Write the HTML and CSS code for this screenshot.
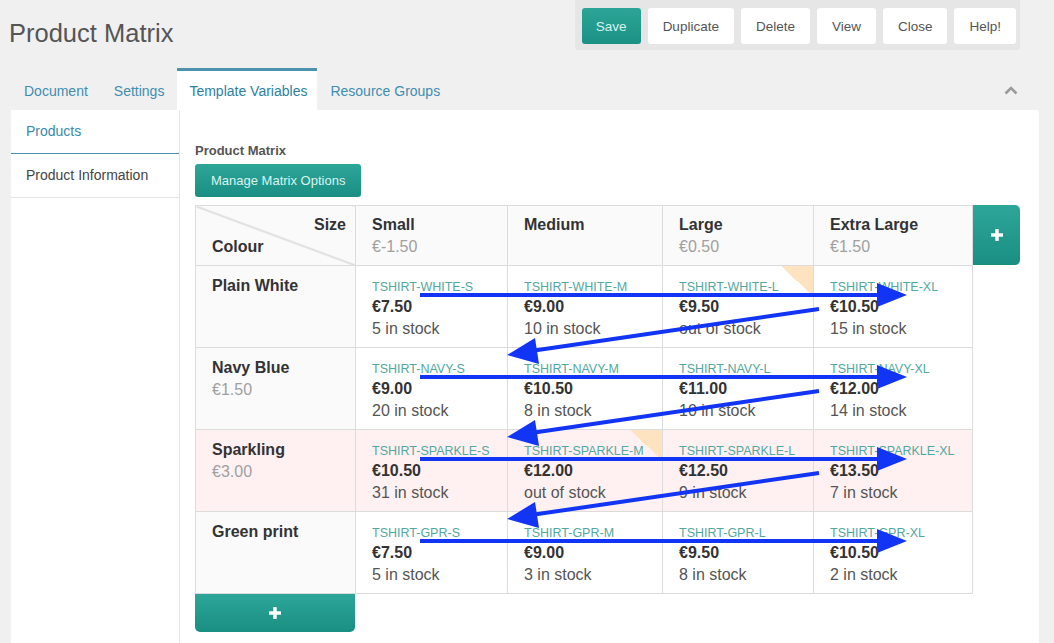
FILE: index.html
```html
<!DOCTYPE html>
<html lang="en">
<head>
<meta charset="utf-8">
<title>Product Matrix</title>
<link rel="stylesheet" href="styles.css">
</head>
<body>
<header class="topbar">
  <h1 class="title">Product Matrix</h1>
  <div class="actions">
    <button class="btn btn-primary">Save</button>
    <button class="btn">Duplicate</button>
    <button class="btn">Delete</button>
    <button class="btn">View</button>
    <button class="btn">Close</button>
    <button class="btn">Help!</button>
  </div>
</header>

<nav class="tabs">
  <div class="tab-list">
    <a class="tab">Document</a>
    <a class="tab">Settings</a>
    <a class="tab tab-active">Template Variables</a>
    <a class="tab">Resource Groups</a>
  </div>
  <svg class="chevron" width="14" height="9" viewBox="0 0 14 9"><path d="M1.5 7.5 L7 2 L12.5 7.5" fill="none" stroke="#9a9a9a" stroke-width="2.6"/></svg>
</nav>

<section class="panel">
  <aside class="side-nav">
    <div class="side-item side-active">Products</div>
    <div class="side-item">Product Information</div>
  </aside>
  <main class="content">
    <div class="field-label">Product Matrix</div>
    <button class="btn-teal manage">Manage Matrix Options</button>

    <div class="matrix-wrap">
      <div class="matrix-row">
        <table class="matrix">
          <colgroup>
            <col class="c0"><col class="c1"><col class="c2"><col class="c3"><col class="c4">
          </colgroup>
          <tr class="head">
            <td class="corner"><div class="size">Size</div><div class="colour">Colour</div></td>
            <td><div class="h">Small</div><div class="muted">€-1.50</div></td>
            <td><div class="h">Medium</div></td>
            <td><div class="h">Large</div><div class="muted">€0.50</div></td>
            <td><div class="h">Extra Large</div><div class="muted">€1.50</div></td>
          </tr>
          <tr>
            <td class="label"><div class="h">Plain White</div></td>
            <td class="cell"><div class="sku">TSHIRT-WHITE-S</div><div class="price">€7.50</div><div class="stock">5 in stock</div></td>
            <td class="cell"><div class="sku">TSHIRT-WHITE-M</div><div class="price">€9.00</div><div class="stock">10 in stock</div></td>
            <td class="cell flag"><div class="sku">TSHIRT-WHITE-L</div><div class="price">€9.50</div><div class="stock">out of stock</div></td>
            <td class="cell"><div class="sku">TSHIRT-WHITE-XL</div><div class="price">€10.50</div><div class="stock">15 in stock</div></td>
          </tr>
          <tr>
            <td class="label"><div class="h">Navy Blue</div><div class="muted">€1.50</div></td>
            <td class="cell"><div class="sku">TSHIRT-NAVY-S</div><div class="price">€9.00</div><div class="stock">20 in stock</div></td>
            <td class="cell"><div class="sku">TSHIRT-NAVY-M</div><div class="price">€10.50</div><div class="stock">8 in stock</div></td>
            <td class="cell"><div class="sku">TSHIRT-NAVY-L</div><div class="price">€11.00</div><div class="stock">10 in stock</div></td>
            <td class="cell"><div class="sku">TSHIRT-NAVY-XL</div><div class="price">€12.00</div><div class="stock">14 in stock</div></td>
          </tr>
          <tr class="pink">
            <td class="label"><div class="h">Sparkling</div><div class="muted">€3.00</div></td>
            <td class="cell"><div class="sku">TSHIRT-SPARKLE-S</div><div class="price">€10.50</div><div class="stock">31 in stock</div></td>
            <td class="cell flag"><div class="sku">TSHIRT-SPARKLE-M</div><div class="price">€12.00</div><div class="stock">out of stock</div></td>
            <td class="cell"><div class="sku">TSHIRT-SPARKLE-L</div><div class="price">€12.50</div><div class="stock">9 in stock</div></td>
            <td class="cell"><div class="sku">TSHIRT-SPARKLE-XL</div><div class="price">€13.50</div><div class="stock">7 in stock</div></td>
          </tr>
          <tr>
            <td class="label"><div class="h">Green print</div></td>
            <td class="cell"><div class="sku">TSHIRT-GPR-S</div><div class="price">€7.50</div><div class="stock">5 in stock</div></td>
            <td class="cell"><div class="sku">TSHIRT-GPR-M</div><div class="price">€9.00</div><div class="stock">3 in stock</div></td>
            <td class="cell"><div class="sku">TSHIRT-GPR-L</div><div class="price">€9.50</div><div class="stock">8 in stock</div></td>
            <td class="cell"><div class="sku">TSHIRT-GPR-XL</div><div class="price">€10.50</div><div class="stock">2 in stock</div></td>
          </tr>
        </table>
        <button class="btn-teal add-col"><svg width="12" height="12" viewBox="0 0 12 12"><rect x="4.3" y="0" width="3.4" height="12" fill="#fff"/><rect x="0" y="4.3" width="12" height="3.4" fill="#fff"/></svg></button>
      </div>
      <button class="btn-teal add-row"><svg width="12" height="12" viewBox="0 0 12 12"><rect x="4.3" y="0" width="3.4" height="12" fill="#fff"/><rect x="0" y="4.3" width="12" height="3.4" fill="#fff"/></svg></button>

      <svg class="arrows" width="830" height="430" viewBox="0 0 830 430">
        <g id="hrow">
          <line x1="225" y1="90" x2="686" y2="90" stroke="#1234f4" stroke-width="4"/>
          <polygon points="682,78 712,90 682,102" fill="#1234f4"/>
        </g>
        <use href="#hrow" y="82"/>
        <use href="#hrow" y="164"/>
        <use href="#hrow" y="246"/>
        <g id="drow">
          <line x1="624" y1="104" x2="336" y2="146" stroke="#1234f4" stroke-width="4"/>
          <polygon points="312,150 344,159 340,133" fill="#1234f4"/>
        </g>
        <use href="#drow" y="82"/>
        <use href="#drow" y="164"/>
      </svg>
    </div>
  </main>
</section>
</body>
</html>
```

FILE: styles.css
```css
* { box-sizing: border-box; }

body {
  margin: 0;
  background: #f0f0f0;
  font-family: "Liberation Sans", Arial, Helvetica, sans-serif;
  color: #555;
}

.topbar {
  display: flex;
  justify-content: space-between;
  align-items: flex-start;
  height: 68px;
}

.title {
  margin: 19px 0 0 9px;
  font-size: 25.5px;
  line-height: 28px;
  font-weight: normal;
  color: #555;
}

.actions {
  margin-right: 34px;
  display: flex;
  gap: 7px;
  padding: 8px 4px 6px 7px;
  background: #e6e6e6;
  border-radius: 0 0 3px 3px;
}

.btn {
  height: 36px;
  padding: 0 15px;
  border: 0;
  border-radius: 3px;
  background: #fff;
  color: #555;
  font-family: "Liberation Sans", Arial, sans-serif;
  font-size: 13.5px;
}

.btn-primary {
  padding: 0 14px;
  background: linear-gradient(#2ba597, #1b9185);
  color: #d5f3ef;
}

.tabs {
  display: flex;
  justify-content: space-between;
  align-items: center;
  height: 42px;
  margin: 0 36px 0 11px;
}

.tab-list {
  display: flex;
  align-self: stretch;
}

.tab {
  display: flex;
  align-items: center;
  padding: 0 13px;
  border-top: 3px solid transparent;
  font-size: 14px;
  color: #3f8db0;
}

.tab-active {
  padding: 0 10px 0 12px;
  background: #fff;
  border-top-color: #4c91ad;
  color: #2e809f;
}

.chevron { margin-top: 2px; }

.panel {
  display: flex;
  margin: 0 15px 0 11px;
  min-height: 533px;
  background: #fff;
  border-radius: 0 3px 0 0;
}

.side-nav {
  width: 169px;
  flex: none;
  border-right: 1px solid #e4e4e4;
  background: #fff;
}

.side-item {
  padding: 13px 15px;
  line-height: 17px;
  font-size: 14px;
  color: #444;
  border-bottom: 1px solid #e4e4e4;
}

.side-active {
  color: #3b89a9;
  border-bottom-color: #4a8fab;
}

.content {
  padding: 33px 0 0 15px;
}

.field-label {
  font-size: 13px;
  line-height: 16px;
  font-weight: bold;
  color: #555;
  margin-bottom: 5px;
}

.btn-teal {
  border: 0;
  background: linear-gradient(#2da699, #1a8e82);
  color: #d8f3ef;
  font-family: "Liberation Sans", Arial, sans-serif;
  display: flex;
  align-items: center;
  justify-content: center;
}

.manage {
  height: 33px;
  padding: 0 16px;
  border-radius: 3px;
  font-size: 13px;
  margin-bottom: 8px;
}

.matrix-wrap {
  position: relative;
  display: inline-block;
}

.matrix-row {
  display: flex;
  align-items: flex-start;
}

.matrix {
  border-collapse: collapse;
  table-layout: fixed;
  width: 777px;
  font-size: 16px;
}

.c0 { width: 160px; }
.c1 { width: 152px; }
.c2 { width: 155px; }
.c3 { width: 151px; }
.c4 { width: 159px; }

.matrix td {
  border: 1px solid #dcdcdc;
  vertical-align: top;
  padding: 12px 16px 7px;
  background: #fff;
}

.matrix .head td {
  background: #fafafa;
  padding: 8px 16px 7px;
}

.matrix td.label {
  background: #fafafa;
  padding: 9px 16px 7px;
}

.matrix .pink td { background: #fff1f1; }

.matrix .head td.corner {
  padding: 8px 9px 7px 16px;
  background:
    linear-gradient(to top right, transparent calc(50% - 1.2px), #dcdcdc calc(50% - 0.6px), #dcdcdc calc(50% + 0.6px), transparent calc(50% + 1.2px)),
    #fafafa;
}

.size { text-align: right; font-weight: bold; color: #333; line-height: 22px; }
.colour { font-weight: bold; color: #333; line-height: 22px; }

.h {
  font-weight: bold;
  color: #333;
  line-height: 22px;
}

.muted {
  color: #a0a0a0;
  line-height: 22px;
}

.sku {
  font-size: 12.5px;
  line-height: 18px;
  color: #52a89e;
  white-space: nowrap;
}

.price {
  font-weight: bold;
  color: #333;
  line-height: 22px;
}

.stock {
  color: #555;
  line-height: 22px;
}

.flag { position: relative; }

.flag::after {
  content: "";
  position: absolute;
  top: 0;
  right: 0;
  width: 32px;
  height: 30px;
  background: linear-gradient(to bottom left, #fde3bf 50%, transparent 50%);
}

.add-col {
  width: 47px;
  height: 60px;
  border-radius: 0 5px 5px 0;
}

.add-row {
  width: 160px;
  height: 38px;
  border-radius: 0 0 5px 5px;
}

.arrows {
  position: absolute;
  top: 0;
  left: 0;
  pointer-events: none;
}
```
